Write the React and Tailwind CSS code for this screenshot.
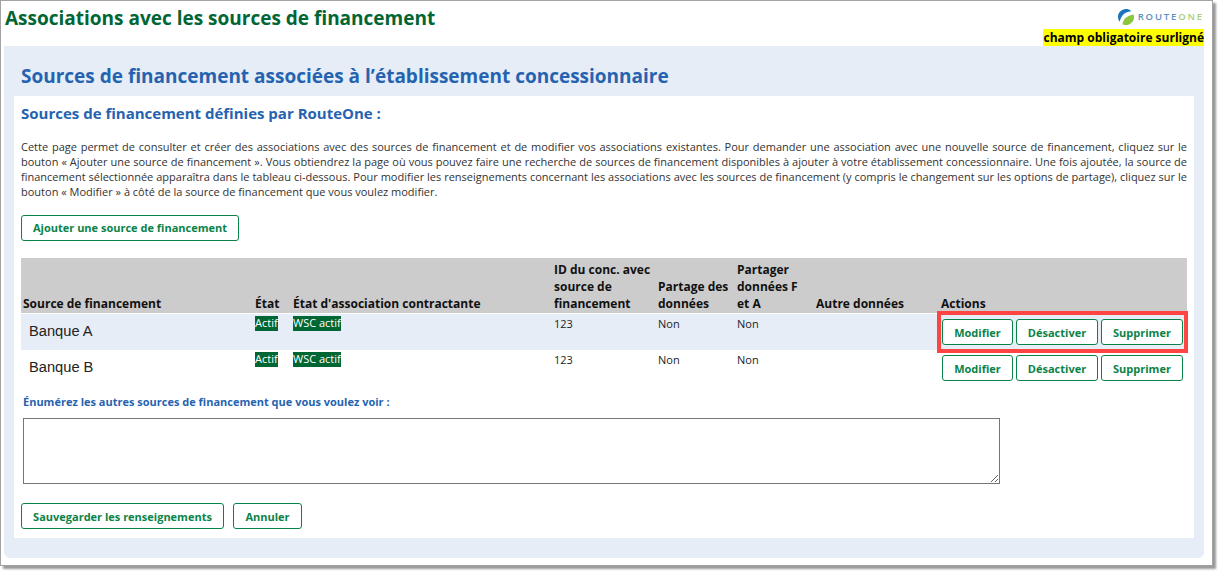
import React from "react";

const font = { fontFamily: '"Open Sans", sans-serif' };

function Btn({ children, className = "" }) {
  return (
    <button className={"h-[26px] rounded-[3px] border border-[#0a8348] bg-white text-center text-[11px] font-bold leading-none text-[#0a8348] " + className}>
      {children}
    </button>
  );
}

function Badge({ children }) {
  return <span className="block h-[15px] w-fit bg-[#006633] text-[11px] leading-[14px] text-white">{children}</span>;
}

function Row({ name, shaded, highlighted }) {
  return (
    <tr className={shaded ? "h-[36px] bg-[#e6edf6]" : "h-[36px] bg-white"}>
      <td className="pb-[2px] pl-[8px] align-middle font-['Liberation_Sans',sans-serif] text-[14.67px] leading-[18px] text-[#222]">{name}</td>
      <td className="pl-[2px] pt-[2px] align-top"><Badge>Actif</Badge></td>
      <td className="pl-[1px] pt-[2px] align-top"><Badge>WSC actif</Badge></td>
      <td className="pl-[2px] pt-[2px] align-top text-[11px] leading-[15px] text-[#222]">123</td>
      <td className="pl-[2px] pt-[2px] align-top text-[11px] leading-[15px] text-[#222]">Non</td>
      <td className="pl-[2px] pt-[2px] align-top text-[11px] leading-[15px] text-[#222]">Non</td>
      <td></td>
      <td className="relative pl-[3px] pt-[5px] align-top">
        <div className="flex gap-[3px]">
          <Btn className="w-[71px]">Modifier</Btn>
          <Btn className="w-[82px]">Désactiver</Btn>
          <Btn className="w-[82px]">Supprimer</Btn>
        </div>
        {highlighted && <div className="absolute left-[-2px] top-[-3px] h-[42px] w-[251px] border-[4px] border-[#ff4444]" />}
      </td>
    </tr>
  );
}

export default function App() {
  return (
    <div className="h-[572px] w-[1220px] overflow-hidden bg-white" style={font}>
      <div className="flex h-[566px] w-[1213px] flex-col border border-[#a3a3a3] bg-white pl-[3px] pr-[8px] shadow-[3px_3px_2px_#9a9a9a]">
        <header className="flex h-[45px] shrink-0 justify-between">
          <h1 className="pl-[1px] pt-[4px] text-[19px] font-bold leading-[26px] text-[#006633]">Associations avec les sources de financement</h1>
          <div className="flex flex-col items-end">
            <div className="flex h-[28px] items-center gap-[4px] pt-[3px]">
              <svg width="16" height="16" viewBox="0 0 16 16">
                <path d="M0.2 9.5A8 8 0 0 1 13.5 2.2C8 2.8 3.5 5 1.6 12.8A8 8 0 0 1 0.2 9.5Z" fill="#1b75bc" />
                <path d="M15.6 5.5A8 8 0 0 1 4.5 15.2C5 10 9 6.5 15.6 5.5Z" fill="#8cc63f" />
              </svg>
              <span className="text-[9.5px] font-semibold leading-none tracking-[1.85px]">
                <span className="text-[#5b8fc0]">ROUTE</span><span className="text-[#a9cf7a]">ONE</span>
              </span>
            </div>
            <span className="h-[17px] bg-[#ffff00] text-[12px] font-bold leading-[17px] text-black">champ obligatoire surligné</span>
          </div>
        </header>
        <main className="flex h-[512px] flex-col rounded-b-[6px] bg-[#e6edf6] px-[10px] pb-[20px]">
          <h2 className="h-[50px] shrink-0 pl-[7px] pt-[17px] text-[19px] font-bold leading-[26px] text-[#2563b0]">Sources de financement associées à l’établissement concessionnaire</h2>
          <section className="flex-1 bg-white px-[7px]">
            <h3 className="pt-[7px] text-[15px] font-bold leading-[20px] text-[#2563b0]">Sources de financement définies par RouteOne :</h3>
            <p className="mt-[16px] w-[1166px] text-justify text-[11px] leading-[15px] text-[#333]">
              Cette page permet de consulter et créer des associations avec des sources de financement et de modifier vos associations existantes. Pour demander une association avec une nouvelle source de financement, cliquez sur le bouton « Ajouter une source de financement ». Vous obtiendrez la page où vous pouvez faire une recherche de sources de financement disponibles à ajouter à votre établissement concessionnaire. Une fois ajoutée, la source de financement sélectionnée apparaîtra dans le tableau ci-dessous. Pour modifier les renseignements concernant les associations avec les sources de financement (y compris le changement sur les options de partage), cliquez sur le bouton « Modifier » à côté de la source de financement que vous voulez modifier.
            </p>
            <div className="mt-[15px] h-[26px]"><Btn className="w-[218px]">Ajouter une source de financement</Btn></div>
            <table className="mt-[18px] w-[1166px] table-fixed border-separate border-spacing-0">
              <colgroup>
                <col className="w-[232px]" /><col className="w-[39px]" /><col className="w-[260px]" /><col className="w-[104px]" />
                <col className="w-[79px]" /><col className="w-[79px]" /><col className="w-[125px]" /><col className="w-[248px]" />
              </colgroup>
              <thead>
                <tr className="h-[56px] text-left align-bottom text-[12px] leading-[17px] text-[#111]">
                  <th className="border-b border-white bg-[#cccccc] pb-[1px] pl-[2px] font-bold">Source de financement</th>
                  <th className="border-b border-white bg-[#cccccc] pb-[1px] pl-[2px] font-bold">État</th>
                  <th className="border-b border-white bg-[#cccccc] pb-[1px] pl-[1px] font-bold">État d'association contractante</th>
                  <th className="border-b border-white bg-[#cccccc] pb-[1px] pl-[2px] font-bold">ID du conc. avec source de financement</th>
                  <th className="border-b border-white bg-[#cccccc] pb-[1px] pl-[2px] font-bold">Partage des données</th>
                  <th className="border-b border-white bg-[#cccccc] pb-[1px] pl-[2px] pr-[8px] font-bold">Partager données F et A</th>
                  <th className="border-b border-white bg-[#cccccc] pb-[1px] pl-[2px] font-bold">Autre données</th>
                  <th className="border-b border-white bg-[#cccccc] pb-[1px] pl-[2px] font-bold">Actions</th>
                </tr>
              </thead>
              <tbody>
                <Row name="Banque A" shaded highlighted />
                <Row name="Banque B" />
              </tbody>
            </table>
            <label className="mt-[6px] block pl-[2px] text-[11px] font-bold leading-[20px] text-[#2563b0]">Énumérez les autres sources de financement que vous voulez voir :</label>
            <textarea className="ml-[2px] mt-[6px] block h-[66px] w-[977px] border border-[#767676]" />
            <div className="mt-[19px] flex gap-[9px]">
              <Btn className="w-[203px]">Sauvegarder les renseignements</Btn>
              <Btn className="w-[69px]">Annuler</Btn>
            </div>
          </section>
        </main>
      </div>
    </div>
  );
}
